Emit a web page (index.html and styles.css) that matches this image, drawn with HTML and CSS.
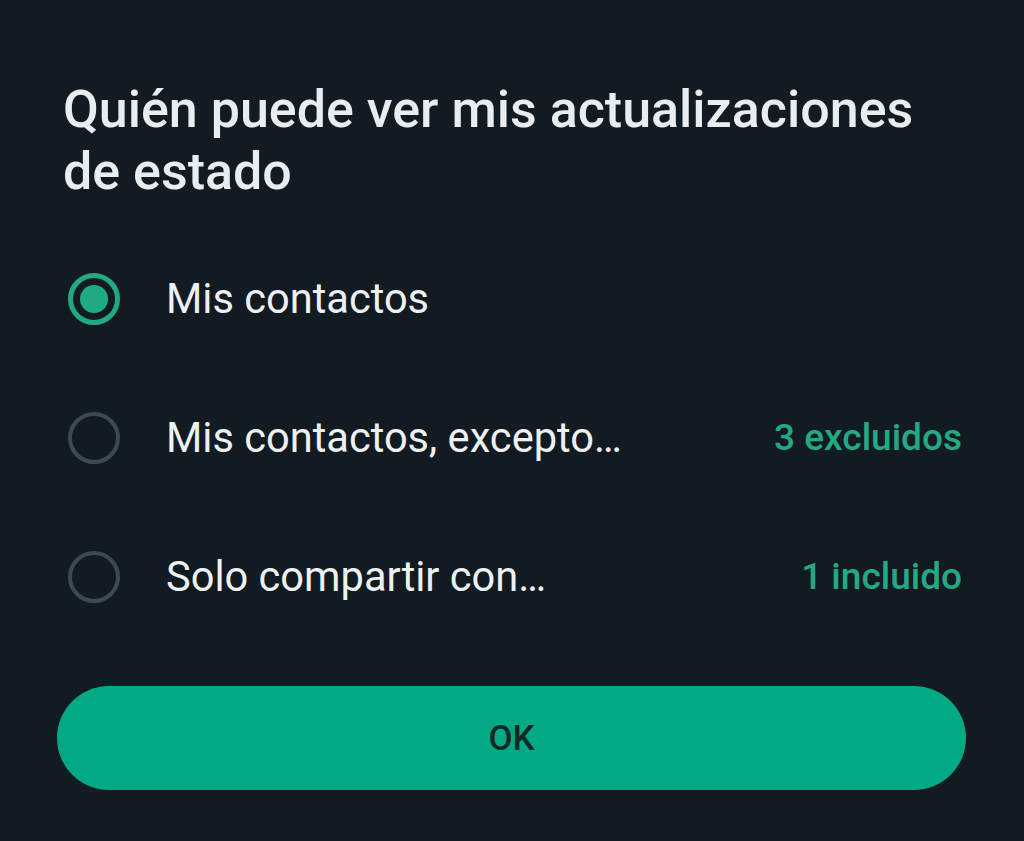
FILE: index.html
```html
<!DOCTYPE html>
<html lang="es">
<head>
<meta charset="utf-8">
<title>Privacidad del estado</title>
<link rel="stylesheet" href="styles.css">
</head>
<body>
<div class="dialog">
  <h1 class="title">Quién puede ver mis actualizaciones de estado</h1>
  <ul class="options">
    <li class="option">
      <span class="radio radio-on"><span class="dot"></span></span>
      <span class="label">Mis contactos</span>
    </li>
    <li class="option">
      <span class="radio"></span>
      <span class="label">Mis contactos, excepto…</span>
      <span class="meta">3 excluidos</span>
    </li>
    <li class="option">
      <span class="radio"></span>
      <span class="label">Solo compartir con…</span>
      <span class="meta">1 incluido</span>
    </li>
  </ul>
  <div class="actions">
    <button class="ok">OK</button>
  </div>
</div>
</body>
</html>
```
FILE: styles.css
```css
html, body {
  margin: 0;
  padding: 0;
  background: #111b21;
  height: 100%;
}
body {
  font-family: Roboto, "Noto Sans", "Liberation Sans", sans-serif;
  color: #e9edef;
}
.dialog {
  padding-top: 79px;
}
.title {
  margin: 0;
  padding: 0 60px 0 63px;
  font-size: 52px;
  font-weight: 500;
  line-height: 62px;
  color: #e9edef;
}
.options {
  list-style: none;
  margin: 26px 0 0 0;
  padding: 0;
}
.option {
  height: 139px;
  display: flex;
  align-items: center;
  padding: 0 62px 0 68px;
}
.radio {
  width: 52px;
  height: 52px;
  box-sizing: border-box;
  border-radius: 50%;
  border: 4.5px solid #3b4a54;
  display: flex;
  align-items: center;
  justify-content: center;
  flex: none;
}
.radio-on {
  border: 5.5px solid #1faa84;
}
.dot {
  width: 28px;
  height: 28px;
  border-radius: 50%;
  background: #1faa84;
}
.label {
  margin-left: 46px;
  font-size: 41.6px;
  font-weight: 400;
  color: #eef1f2;
  flex: 1;
  white-space: nowrap;
}
.meta {
  font-size: 37px;
  font-weight: 500;
  color: #25a884;
  white-space: nowrap;
}
.actions {
  margin-top: 40px;
  padding: 0 58px 0 57px;
}
.ok {
  display: block;
  width: 100%;
  height: 104px;
  border: none;
  border-radius: 52px;
  background: #03a884;
  color: #0b2a23;
  font-family: Roboto, "Noto Sans", sans-serif;
  font-size: 35px;
  font-weight: 500;
  padding: 0;
}
```
